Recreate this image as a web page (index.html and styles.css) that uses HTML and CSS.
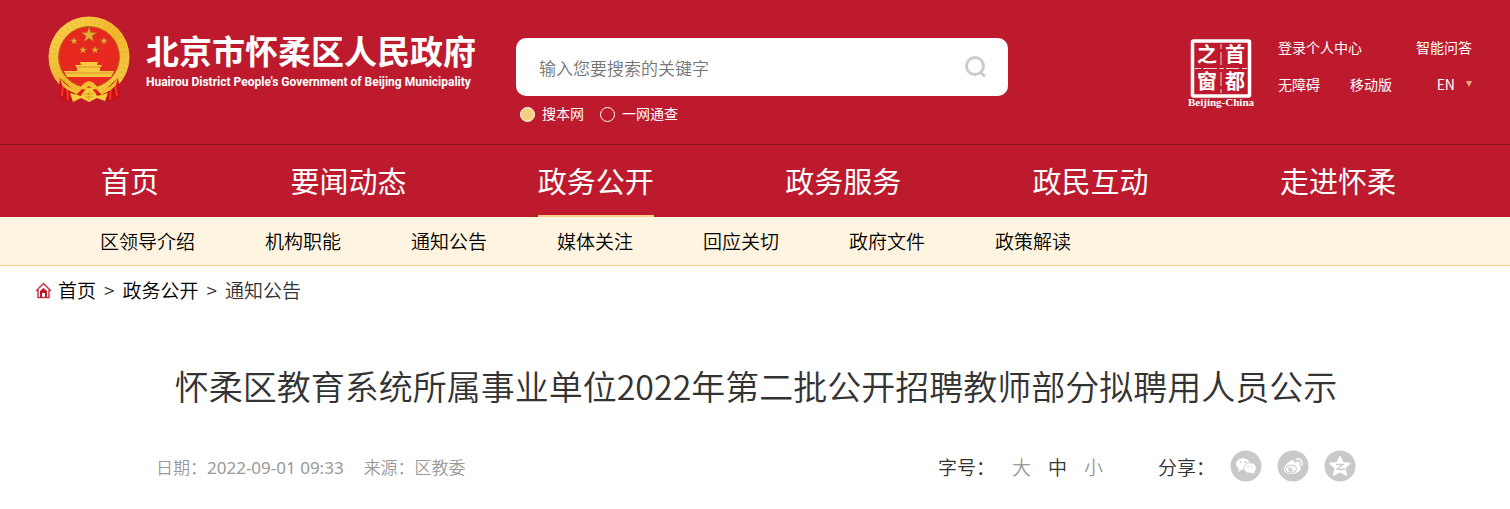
FILE: index.html
```
<!DOCTYPE html>
<html lang="zh-CN">
<head>
<meta charset="utf-8">
<meta name="viewport" content="width=device-width, initial-scale=1">
<title>怀柔区教育系统所属事业单位2022年第二批公开招聘教师部分拟聘用人员公示</title>
<link rel="stylesheet" href="styles.css">
</head>
<body>
<header class="site-header">
  <a class="brand" href="#">
    <svg class="emblem" viewBox="0 0 82 88" aria-hidden="true">
      <defs>
        <linearGradient id="gold" x1="0" y1="0" x2="1" y2="1">
          <stop offset="0" stop-color="#f9dc55"/><stop offset=".5" stop-color="#f2b52c"/><stop offset="1" stop-color="#f8d24a"/>
        </linearGradient>
        <path id="star" d="M0-10 2.4-3.2 9.5-3.1 3.8 1.2 5.9 8.1 0 4-5.9 8.1-3.8 1.2-9.5-3.1-2.4-3.2Z"/>
      </defs>
      <circle cx="41" cy="41" r="40.500" fill="url(#gold)"/>
      <circle cx="41" cy="41" r="36" fill="none" stroke="#df9a21" stroke-width="6" stroke-dasharray="2 3" opacity=".2"/>
      <circle cx="41" cy="41" r="30.5" fill="#e7281f" stroke="#b96b19" stroke-width="1"/>
      <g fill="#e6ac35" stroke="#a96718" stroke-width=".7">
        <use href="#star" transform="translate(41 19) scale(.8)"/>
        <use href="#star" transform="translate(26 25) scale(.4)"/>
        <use href="#star" transform="translate(56 25) scale(.4)"/>
        <use href="#star" transform="translate(35 34) scale(.4)"/>
        <use href="#star" transform="translate(47 34) scale(.4)"/>
      </g>
      <path d="M32 46H50L49 49H54L52 52V55H66L63 61H19L16 55H29V52L27 49H33Z" fill="#f6c83e"/>
      <path d="M30 51H52M18 57H64" stroke="#cf7d20" stroke-width=".7"/>
      <path d="M19 61H63Q52 71 41 71Q28 71 19 61Z" fill="#e7281f"/>
      <path d="M12 62 10 81 20 86 30 82 24 73ZM70 62 73 81 63 86 52 82 58 73Z" fill="#c90f17"/>
      <path d="M15 67 14 80M19 71 20 84M67 67 69 80M63 71 62 84" stroke="#ed382b" stroke-width="2" fill="none"/>
      <path d="M12 62Q19 72 30 75Q35 66 41 65Q47 66 52 75Q63 72 70 62L68 69Q62 76 54 78L41 70 29 78Q19 75 14 69Z" fill="#f5bd30"/>
      <path d="M28 79 34 73 41 75 48 73 54 79 47 82 41 86 35 82Z" fill="#df2119"/>
      <path d="M22 77 33 80Q35 74 41 73Q47 74 49 80L60 77 57 85 49 82 41 86 33 82 25 86Z" fill="#f8cd3c"/>
      <path d="M36 78H46M37 81H45M41 75V84" stroke="#cf861d" stroke-width=".7" fill="none"/>
    </svg>
    <span class="brand-text">
      <strong class="brand-name">北京市怀柔区人民政府</strong>
      <span class="brand-en">Huairou District People's Government of Beijing Municipality</span>
    </span>
  </a>
  <form class="search">
    <div class="search-box">
      <input class="search-input" type="text" placeholder="输入您要搜索的关键字" aria-label="搜索">
      <button class="search-button" type="button" aria-label="搜索">
        <svg viewBox="0 0 24 24" width="24" height="24"><circle cx="11" cy="11" r="8.500"/><path d="m16 17 5 4.500"/></svg>
      </button>
    </div>
    <div class="scopes">
      <label class="scope"><input type="radio" name="scope" checked>搜本网</label>
      <label class="scope"><input type="radio" name="scope">一网通查</label>
    </div>
  </form>
  <a class="seal" href="#" aria-label="首都之窗">
    <svg viewBox="0 0 66 70" width="66" height="70">
      <rect x="4.500" y="3" width="57" height="55" rx="1" fill="none" stroke="#fff" stroke-width="3.500"/>
      <path d="M33 6V11M33 14V27M33 34V48M33 51V55M7 30.500H13M15 30.500H29M31 30.500H36M38 30.500H51M54 30.500H59" stroke="#fff" stroke-width="1" opacity=".8"/>
      <g class="seal-chars"><text x="9" y="24">之</text><text x="37" y="24">首</text><text x="9" y="51">窗</text><text x="37" y="51">都</text></g>
      <text class="seal-en" x="33" y="68">Beijing-China</text>
    </svg>
  </a>
  <nav class="tools" aria-label="工具">
    <div class="tools-row"><a href="#">登录个人中心</a><a class="tools-end" href="#">智能问答</a></div>
    <div class="tools-row"><a href="#">无障碍</a><a href="#">移动版</a><button class="language tools-end" type="button">EN <i class="arrow"></i></button></div>
  </nav>
</header>
<nav class="main-nav" aria-label="主导航">
  <a href="#">首页</a><a href="#">要闻动态</a><a class="active" href="#">政务公开</a><a href="#">政务服务</a><a href="#">政民互动</a><a href="#">走进怀柔</a>
</nav>
<nav class="sub-nav" aria-label="政务公开">
  <a href="#">区领导介绍</a><a href="#">机构职能</a><a href="#">通知公告</a><a href="#">媒体关注</a><a href="#">回应关切</a><a href="#">政府文件</a><a href="#">政策解读</a>
</nav>
<nav class="crumbs" aria-label="当前位置">
  <svg viewBox="0 0 17 17" width="17" height="17" aria-hidden="true"><path d="M1 9 8.500 1.500 16 9M3 8V15.500H14V8" fill="none" stroke="#c43a4b" stroke-width="1.500"/><path d="M5 15.500V9L8.500 6 12 9V15.500H10V11H7V15.500Z" fill="#bd1a2d"/></svg>
  <a href="#">首页</a><span>&gt;</span><a href="#">政务公开</a><span>&gt;</span><span>通知公告</span>
</nav>
<main class="article">
  <h1 class="title">怀柔区教育系统所属事业单位2022年第二批公开招聘教师部分拟聘用人员公示</h1>
  <div class="meta">
    <div class="source"><span>日期：<time datetime="2022-09-01T09:33">2022-09-01 09:33</time></span><span>来源：区教委</span></div>
    <div class="sizes"><span class="label">字号：</span><button type="button">大</button><button class="current" type="button">中</button><button type="button">小</button></div>
    <div class="share">
      <span class="label">分享：</span>
      <a href="#" aria-label="微信"><svg viewBox="0 0 32 32"><circle cx="16" cy="16" r="15.500" fill="#c9c9c9"/><path d="m9 18-1 4 4-2.500Z" fill="#fff"/><ellipse cx="13" cy="14" rx="7" ry="5.800" fill="#fff"/><ellipse cx="20" cy="18" rx="6.300" ry="5.200" fill="#fff" stroke="#c9c9c9" stroke-width=".8"/><path d="m21 22 3.500 2-.5-4Z" fill="#fff"/><g fill="#c9c9c9"><circle cx="10.500" cy="12" r=".9"/><circle cx="15.500" cy="12" r=".9"/><circle cx="18" cy="16.500" r=".8"/><circle cx="22" cy="16.500" r=".8"/></g></svg></a>
      <a href="#" aria-label="微博"><svg viewBox="0 0 32 32"><circle cx="16" cy="16" r="15.500" fill="#c9c9c9"/><path d="M14.500 10.500c2-.8 3.200.2 2.800 2.300 3-1 5 0 4.200 2.200 3 1 3 3.500 1 5.800-4 4.500-14.500 4.500-15.500-.8-.5-3 3.500-8 7.500-9.500Z" fill="#fff"/><ellipse cx="14" cy="19" rx="5.500" ry="3.900" fill="none" stroke="#c9c9c9" stroke-width="1" transform="rotate(-8 14 19)"/><circle cx="13.500" cy="19.500" r="2.300" fill="#c9c9c9"/><circle cx="14" cy="19" r=".8" fill="#fff"/><path d="M19.500 9c4-.8 6.500 2 5.300 6M20 12c1.800-.3 2.700.7 2.300 2.200" fill="none" stroke="#fff" stroke-width="1.500" stroke-linecap="round"/></svg></a>
      <a href="#" aria-label="QQ空间"><svg viewBox="0 0 32 32"><circle cx="16" cy="16" r="15.500" fill="#c9c9c9"/><path d="m16 6 3 6.500 7.500.8-5.500 5 1.500 7.200-6.500-3.500-6.500 3.500L11 18.300l-5.500-5 7.500-.8Z" fill="#fff" stroke="#fff" stroke-width="1" stroke-linejoin="round"/><path d="M12 14.500H19L13 19Q16 20 21 19" fill="none" stroke="#c9c9c9" stroke-width="1.300"/></svg></a>
    </div>
  </div>
</main>
</body>
</html>
```
FILE: styles.css
```
* { box-sizing: border-box; }
body {
  margin: 0;
  background: #fff;
  color: #333;
  font-family: "Noto Sans CJK SC", "Noto Sans", sans-serif;
  font-weight: 350;
}
a { color: inherit; text-decoration: none; }
button { padding: 0; border: 0; background: none; color: inherit; font: inherit; cursor: pointer; }
svg { display: block; }

.site-header {
  display: flex;
  align-items: flex-start;
  padding: 16px 38px 21px 48px;
  background: #bd1a2d;
  color: #fff;
}
.brand { display: flex; flex: none; gap: 16px; width: 438px; }
.emblem { flex: none; width: 82px; height: 88px; }
.brand-text { display: flex; flex-direction: column; padding-top: 13px; white-space: nowrap; }
.brand-name { font-size: 33px; line-height: 42px; font-weight: 700; }
.brand-en { font: 700 12px/22px Roboto, "Liberation Sans", sans-serif; }

.search { width: 492px; margin: 22px 20px 0 30px; }
.search-box { display: flex; align-items: center; padding: 0 20px 0 23px; border-radius: 10px; background: #fff; }
.search-input {
  flex: 1;
  min-width: 0;
  height: 58px;
  padding: 0;
  border: 0;
  outline: 0;
  background: none;
  color: #333;
  font: inherit;
  font-size: 17px;
}
.search-input::placeholder { color: #757575; }
.search-button svg { fill: none; stroke: #ccc; stroke-width: 3; }
.scopes { display: flex; gap: 16px; padding: 7px 0 0 4px; }
.scope { display: flex; align-items: center; gap: 7px; font-size: 14px; line-height: 20px; font-weight: 400; }
.scope input { appearance: none; width: 15px; height: 15px; margin: 2px 0 0; border: 1px solid #fff; border-radius: 50%; }
.scope input:checked { background: #f5d080; }

.seal { flex: none; margin: 22px 24px 0 auto; }
.seal-chars { fill: #fff; font: 700 20px/20px "Noto Sans CJK SC", sans-serif; }
.seal-en { fill: #fff; font: 700 11px/11px "Liberation Serif", serif; text-anchor: middle; }

.tools { display: grid; gap: 17px; width: 194px; margin-top: 21px; font-size: 14px; line-height: 20px; font-weight: 400; }
.tools-row { display: flex; gap: 30px; }
.tools-end { margin-left: auto; }
.language { display: flex; align-items: center; gap: 11px; }
.arrow { border: 3px solid transparent; border-top: 6px solid #e0b070; border-bottom: 0; }

.main-nav {
  display: flex;
  justify-content: space-between;
  padding: 0 114px 0 101px;
  border-top: 1px solid #8b1522;
  background: #bd1a2d;
  color: #fff;
  font-size: 29px;
  line-height: 70px;
  font-weight: 400;
}
.main-nav a { border-bottom: 2px solid transparent; }
.main-nav .active { border-color: #f5ce85; }

.sub-nav {
  display: flex;
  gap: 70px;
  padding: 0 100px;
  border-bottom: 1px solid #f5ce85;
  background: #fff4df;
  color: #000;
  font-size: 19px;
  line-height: 48px;
}
.crumbs { display: flex; align-items: center; gap: 8px; padding: 10px 35px; font-size: 19px; line-height: 28px; }
.crumbs svg { margin-right: -2px; }
.crumbs a { color: #000; }

.article { padding: 46px 154px 20px 156px; }
.title { display: flex; justify-content: center; margin: 0; font-size: 34px; line-height: 52px; font-weight: 350; white-space: nowrap; }
.meta { display: flex; align-items: center; margin-top: 38px; }
.source { display: flex; gap: 20px; margin-right: auto; color: #999; font-size: 17px; }
.source time { font-family: "Noto Sans", sans-serif; font-weight: 400; }
.sizes { display: flex; gap: 17px; margin-right: 55px; color: #999; font-size: 19px; }
.sizes .current, .label { color: #333; }
.share { display: flex; align-items: center; gap: 15px; font-size: 19px; }
.share svg { width: 32px; height: 32px; }
```
